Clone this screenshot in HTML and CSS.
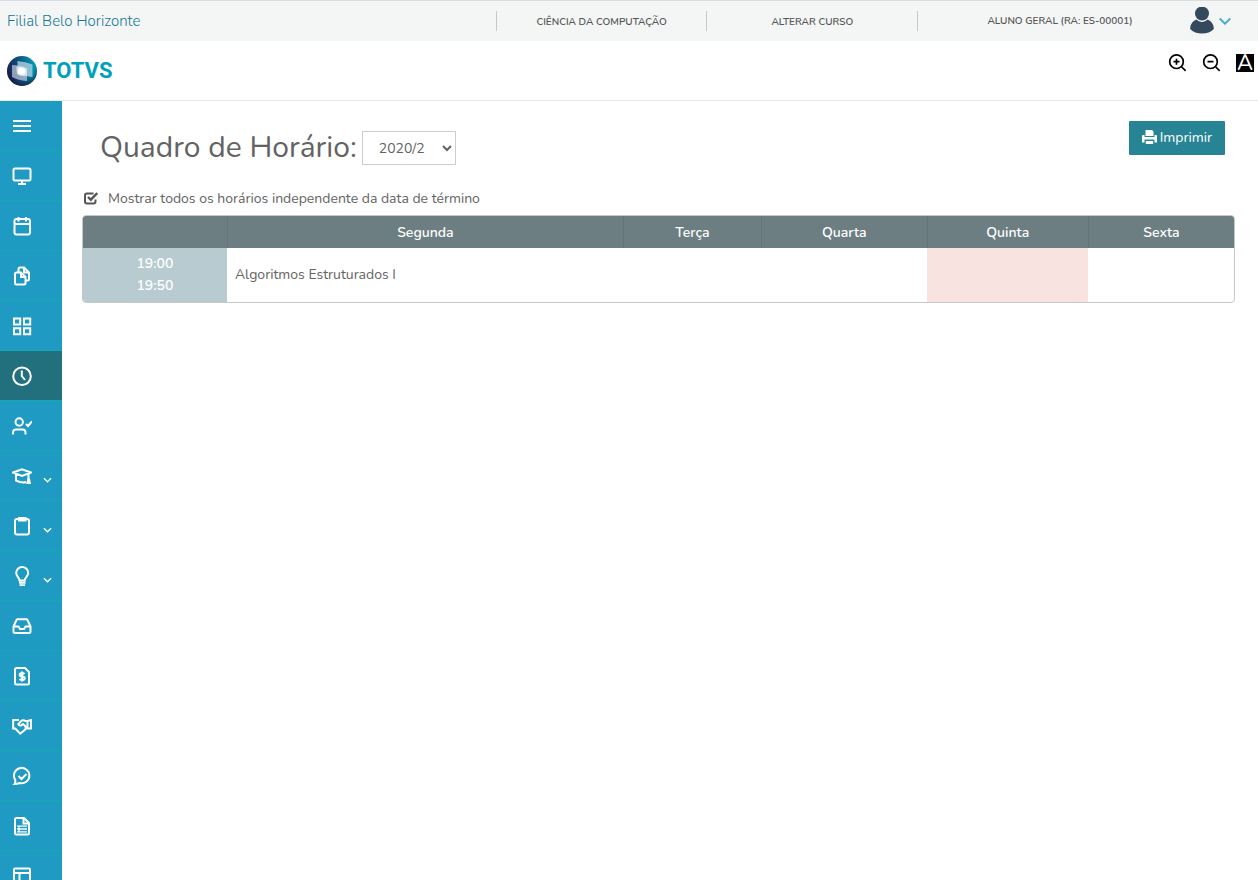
FILE: index.html
```html
<!DOCTYPE html>
<html lang="pt-BR">
<head>
  <meta charset="UTF-8">
  <meta name="viewport" content="width=device-width, initial-scale=1.0">
  <title>Quadro de Horário</title>
  <link rel="stylesheet" href="styles.css">
</head>
<body>

  <header class="topbar">
    <a class="branch" href="#">Filial Belo Horizonte</a>
    <a class="topbar-item" href="#">CIÊNCIA DA COMPUTAÇÃO</a>
    <a class="topbar-item" href="#">ALTERAR CURSO</a>
    <div class="topbar-item user">
      <span class="user-name">ALUNO GERAL (RA: ES-00001)</span>
      <button class="user-menu" type="button" aria-label="Menu do aluno">
        <svg width="24" height="28" viewBox="0 0 24 28" fill="#34495e"><circle cx="12" cy="6.500" r="7"/><path d="M6.500 12.500c3 3.200 8 3.200 11 0 4 1.500 6.300 5 6.300 9.500C21 25 17 26.500 12 26.500S3 25 .2 22c0-4.500 2.300-8 6.300-9.500z"/></svg>
        <svg width="12" height="8" viewBox="0 0 12 8" fill="none" stroke="#46aecb" stroke-width="2"><path d="M.7 1.500 6 6.700 11.300 1.500"/></svg>
      </button>
    </div>
  </header>

  <div class="brandbar">
    <a class="logo" href="#">
      <svg width="30" height="30" viewBox="0 0 30 30" aria-hidden="true">
        <defs>
          <linearGradient id="ball" x1="0" y1=".6" x2="1" y2=".3">
            <stop offset="0" stop-color="#1c1b47"/>
            <stop offset=".5" stop-color="#0d5580"/>
            <stop offset="1" stop-color="#00a3b8"/>
          </linearGradient>
          <radialGradient id="shade" cx=".5" cy=".4" r=".6">
            <stop offset=".7" stop-color="#15204a" stop-opacity="0"/>
            <stop offset="1" stop-color="#15204a" stop-opacity=".8"/>
          </radialGradient>
          <radialGradient id="glow">
            <stop offset=".5" stop-color="#fff"/>
            <stop offset="1" stop-color="#fff" stop-opacity=".4"/>
          </radialGradient>
        </defs>
        <circle cx="15" cy="15" r="15" fill="url(#ball)"/>
        <circle cx="15" cy="15" r="15" fill="url(#shade)"/>
        <path d="M10.500 5q8 .5 15 3.500v12.500q-7-.5-15-3z" fill="#b9d9e6" fill-opacity=".75"/>
        <path d="M5 9q8 0 15 3.500V25Q11 24.500 5 21z" fill="#c3cde0" fill-opacity=".7"/>
        <path d="M9 10.500q6-1 11 2v7.500q-6 1-10-2z" fill="url(#glow)"/>
      </svg>
      <span class="logo-text">TOTVS</span>
    </a>
    <div class="tools">
      <button class="tool" type="button" aria-label="Aumentar fonte">
        <svg width="18" height="18" viewBox="0 0 18 18" fill="none" stroke="#000" stroke-width="1.700"><circle cx="8.500" cy="7.700" r="6.800"/><path d="m13.300 12.500 4.400 4.400M5.500 7.700h6M8.500 4.700v6"/></svg>
      </button>
      <button class="tool" type="button" aria-label="Diminuir fonte">
        <svg width="18" height="18" viewBox="0 0 18 18" fill="none" stroke="#000" stroke-width="1.700"><circle cx="8.500" cy="7.700" r="6.800"/><path d="m13.300 12.500 4.400 4.400M5.500 7.700h6"/></svg>
      </button>
      <button class="tool contrast" type="button" aria-label="Alto contraste">A</button>
    </div>
  </div>

  <div class="layout">
    <nav class="sidebar" aria-label="Menu principal">
      <button class="side-item" type="button" aria-label="Abrir menu">
        <svg class="icon" viewBox="0 0 20 20"><path d="M1 5h18M1 10h18M1 15h18"/></svg>
      </button>
      <a class="side-item" href="#" aria-label="Mural">
        <svg class="icon" viewBox="0 0 20 20"><rect x="1.500" y="2.500" width="17" height="12" rx="1.500"/><path d="M10 14.500v3M6 18h8"/></svg>
      </a>
      <a class="side-item" href="#" aria-label="Calendário">
        <svg class="icon" viewBox="0 0 20 20"><rect x="2.500" y="3" width="15.500" height="15.500" rx="2"/><path d="M2.500 8h15.500M6.500 1v4.500M14 1v4.500"/></svg>
      </a>
      <a class="side-item" href="#" aria-label="Arquivos">
        <svg class="icon" viewBox="0 0 20 20"><path d="M4.500 6.500h4.500l4.500 4.500v6q0 1.500-1.500 1.500H4.500q-1.500 0-1.500-1.500V8q0-1.500 1.500-1.500z"/><path d="M9 7v4h4.500M6.500 6V3q0-1.500 1.500-1.500h4l5 5v6.500q0 1.500-1.500 1.500h-2M12 2v4.500h4.500"/></svg>
      </a>
      <a class="side-item" href="#" aria-label="Disciplinas">
        <svg class="icon" viewBox="0 0 20 20"><path d="M2 2.500h6.200v6H2zM12 2.500h6.200v6H12zM2 12.200h6.200v6H2zM12 12.200h6.200v6H12z"/></svg>
      </a>
      <a class="side-item active" href="#" aria-label="Quadro de horário" aria-current="page">
        <svg class="icon" viewBox="0 0 20 20"><circle cx="10" cy="10.200" r="8.800"/><path d="M9.800 4.500V10l3.200 4"/></svg>
      </a>
      <a class="side-item" href="#" aria-label="Frequência">
        <svg class="icon" viewBox="0 0 20 20"><circle cx="7.200" cy="6" r="3.700"/><path d="M1 18.500v-2q0-3 3-3h6.500q3 0 3 3v2M14 8l2 2 4-4.500"/></svg>
      </a>
      <a class="side-item" href="#" aria-label="Acadêmico">
        <svg class="icon" viewBox="0 0 20 20"><path d="M1 6.500 10 3.200l9 3.300-9 3.500zM4 8v6.500q6 3 10 1.500M16.500 8v6"/><path class="solid" d="M15.500 12.500h2.500l1 5.500h-5z"/></svg>
        <svg class="caret" viewBox="0 0 10 6"><path d="m1 1 4 4 4-4"/></svg>
      </a>
      <a class="side-item" href="#" aria-label="Avaliações">
        <svg class="icon" viewBox="0 0 20 20"><rect x="3" y="3" width="14" height="15.500" rx="2"/><path d="M7 2h6.500v2.500H7z"/></svg>
        <svg class="caret" viewBox="0 0 10 6"><path d="m1 1 4 4 4-4"/></svg>
      </a>
      <a class="side-item" href="#" aria-label="Oportunidades">
        <svg class="icon" viewBox="0 0 20 20"><path d="M7.500 14.500c0-3-3.300-4-3.300-7.500a6 6 0 0 1 12 0c0 3.500-3.500 4.500-3.500 7.500zM7 16.800h6.500M7.500 19.200h5.500"/></svg>
        <svg class="caret" viewBox="0 0 10 6"><path d="m1 1 4 4 4-4"/></svg>
      </a>
      <a class="side-item" href="#" aria-label="Requerimentos">
        <svg class="icon" viewBox="0 0 20 20"><path d="M1.500 10.500 4.500 4q.3-.7 1-.7h9q.7 0 1 .7l3 6.500v5q0 1.500-1.500 1.500H3q-1.500 0-1.500-1.500zM1.500 10.500h5l1.500 2.500h4l1.500-2.500h5"/></svg>
      </a>
      <a class="side-item" href="#" aria-label="Financeiro">
        <svg class="icon" viewBox="0 0 20 20"><path d="M4.500 2h8.500l4 4V17q0 1.500-1.500 1.500h-11q-1.500 0-1.500-1.500V3.500Q3 2 4.500 2z"/><path d="M12.500 8q-1-1-2.500-1-2.300 0-2.300 1.700t2.300 1.700q2.700 0 2.700 1.800T10 14q-1.500 0-2.500-1.200M10 5.500v10"/></svg>
      </a>
      <a class="side-item" href="#" aria-label="Negociação">
        <svg class="icon" viewBox="0 0 20 20"><path d="M7 4H1.200v8.500h2l5 5.200 5-4.200q1.500-2-.5-4L11 8 9 9.500q-2 .5-2.700-1.500L9.500 4.700q2-1.200 4 .3h2L19 4v8.500h-5.500M15.500 5v7"/></svg>
      </a>
      <a class="side-item" href="#" aria-label="Atendimento">
        <svg class="icon" viewBox="0 0 20 20"><path d="M2.500 18q1.200-1.500.7-4.200A7.700 7.700 0 1 1 7.500 17Q5.500 18 2.500 18zM6.500 10l3 3 5-5"/></svg>
      </a>
      <a class="side-item" href="#" aria-label="Relatórios">
        <svg class="icon" viewBox="0 0 20 20"><path d="M4.500 2h7.500l5 5v10q0 1.500-1.500 1.500h-11q-1.500 0-1.500-1.500V3.500Q3 2 4.500 2zM11.500 2v5.500H17"/><path class="thin" d="M5 10.200h10M5 13h10M5 15.800h10M7 9.500v7"/></svg>
      </a>
      <a class="side-item" href="#" aria-label="Painel">
        <svg class="icon" viewBox="0 0 20 20"><rect x="2" y="2.500" width="16" height="16" rx="1"/><path d="M2 7h16M7.500 7v11"/></svg>
      </a>
    </nav>

    <main class="content">
      <div class="page-head">
        <h1><label for="periodo">Quadro de Horário:</label></h1>
        <select class="period" id="periodo">
          <option>2020/2</option>
        </select>
        <button class="print" type="button">
          <svg class="print-icon" width="15" height="14" viewBox="0 0 15 14" fill="#fff"><path d="M3.500 0H10l1.500 1.500V6h-8zM1 5h1.500v2h10V5H14q1 0 1 1v6.500h-2.500V9.500h-10v3H0V6q0-1 1-1z"/><path d="M3.800 11h7.400v3H3.800z"/></svg>
          Imprimir
        </button>
      </div>

      <label class="show-all">
        <input class="show-all-input" type="checkbox" checked>
        <svg class="show-all-mark" width="14" height="14" viewBox="0 0 14 14" fill="none" stroke="#555" stroke-width="2"><path d="M9.500 1.500H3Q1 1.500 1 3.500v6q0 2 2 2h6.500q2 0 2-2V7.500"/><path d="M4 5 6.800 7.700 13.300 1" stroke-width="2.400"/></svg>
        <span>Mostrar todos os horários independente da data de término</span>
      </label>

      <div class="timetable-box">
        <table class="timetable">
          <colgroup>
            <col class="col-hour">
            <col class="col-segunda">
            <col class="col-terca">
            <col class="col-quarta">
            <col class="col-quinta">
            <col class="col-sexta">
          </colgroup>
          <thead>
            <tr>
              <td></td>
              <th scope="col">Segunda</th>
              <th scope="col">Terça</th>
              <th scope="col">Quarta</th>
              <th scope="col">Quinta</th>
              <th scope="col">Sexta</th>
            </tr>
          </thead>
          <tbody>
            <tr>
              <th scope="row" class="hour">19:00<br>19:50</th>
              <td>Algoritmos Estruturados I</td>
              <td></td>
              <td></td>
              <td class="today"></td>
              <td></td>
            </tr>
          </tbody>
        </table>
      </div>
    </main>
  </div>

</body>
</html>
```
FILE: styles.css
```css
* {
  box-sizing: border-box;
}

body {
  display: flex;
  flex-direction: column;
  height: 100vh;
  margin: 0;
  overflow: hidden;
  background-color: #fff;
  color: #636363;
  font-family: Nunito, "Nunito Sans", "Open Sans", sans-serif;
  font-size: 14px;
  line-height: 22px;
}

a {
  color: inherit;
  text-decoration: none;
}

button,
select {
  font: inherit;
}

svg {
  display: block;
}

/* top bar */
.topbar {
  display: grid;
  grid-template-columns: 80fr 34fr 34fr 55fr;
  align-items: center;
  flex: none;
  height: 41px;
  border-top: 1px solid #dadce2;
  background-color: #f4f6f6;
}

.branch {
  padding-left: 7px;
  color: #177690;
  font-size: 15px;
  font-weight: 300;
}

.topbar-item {
  height: 20px;
  border-left: 1px solid #c4c8c8;
  color: #555;
  font-size: 10px;
  font-weight: 600;
  line-height: 22px;
  text-align: center;
}

.user {
  display: flex;
  align-items: center;
  padding: 0 27px 0 12px;
}

.user-name {
  flex: 1;
}

.user-menu {
  display: flex;
  align-items: center;
  gap: 5px;
  padding: 0;
  border: 0;
  background: none;
}

/* logo and accessibility tools */
.brandbar {
  display: flex;
  justify-content: space-between;
  flex: none;
  height: 60px;
  padding: 12px 4px 0 7px;
  border-bottom: 1px solid #e7e9e9;
}

.logo {
  display: flex;
  align-items: center;
  gap: 6px;
  height: 36px;
}

.logo-text {
  color: #009fbe;
  font-family: Roboto, sans-serif;
  font-size: 22px;
  font-weight: 700;
  line-height: 24px;
}

.tools {
  display: flex;
  gap: 16px;
  margin-top: 1px;
}

.tool {
  width: 18px;
  height: 18px;
  padding: 0;
  border: 0;
  background: none;
}

.contrast {
  background-color: #000;
  color: #fff;
  font-size: 22px;
  line-height: 18px;
}

/* side menu */
.layout {
  display: flex;
  flex: 1;
  min-height: 0;
}

.sidebar {
  flex: none;
  width: 62px;
  overflow: hidden;
  background-color: #1f9ac2;
}

.side-item {
  display: flex;
  align-items: center;
  gap: 11px;
  width: 100%;
  height: 50px;
  padding: 0 12px;
  border: 0;
  border-bottom: 1px solid #15a7b5;
  background: none;
}

.side-item.active {
  background-color: #226f7d;
}

.icon,
.caret {
  flex: none;
  width: 20px;
  height: 20px;
  fill: none;
  stroke: #fff;
  stroke-width: 2;
}

.icon .solid {
  fill: #fff;
  stroke: none;
}

.icon .thin {
  stroke-width: 1.3;
}

.caret {
  width: 9px;
  height: 6px;
  margin-top: 8px;
  stroke-width: 1.6;
}

/* page */
.content {
  flex: 1;
  min-width: 0;
  padding: 20px 23px 20px 20px;
}

.page-head {
  display: flex;
  align-items: flex-start;
  gap: 5px;
  padding: 0 10px 0 18px;
}

h1 {
  margin: 0;
  font-size: 30px;
  font-weight: 400;
  line-height: 54px;
}

.period {
  width: 94px;
  height: 34px;
  margin-top: 10px;
  padding: 6px 12px;
  border: 1px solid #ccc;
  border-radius: 0;
  background-color: #fff;
  color: #636363;
}

.print {
  display: flex;
  align-items: center;
  gap: 3px;
  height: 34px;
  margin-left: auto;
  padding: 0 13px;
  border: 0;
  border-radius: 1px;
  background-color: #278495;
  color: #fff;
}

.print-icon {
  margin-bottom: 3px;
}

.show-all {
  display: grid;
  grid-template-columns: 14px auto;
  align-items: center;
  justify-content: start;
  gap: 10px;
  margin: 13px 0 5px 2px;
}

/* the drawn mark lies over the bare checkbox */
.show-all-input,
.show-all-mark {
  grid-area: 1 / 1;
}

.show-all-input {
  width: 14px;
  height: 14px;
  margin: 0;
  appearance: none;
}

.show-all-mark {
  pointer-events: none;
}

.show-all-input:not(:checked) + .show-all-mark path:last-child {
  display: none;
}

/* timetable */
.timetable-box {
  overflow: hidden;
  border: 1px solid #c6c8c8;
  border-radius: 4px;
}

.timetable {
  width: 100%;
  border-spacing: 0;
  table-layout: fixed;
}

.col-hour {
  width: 12.5%;
}

.col-segunda {
  width: 34.4%;
}

.col-terca {
  width: 12%;
}

.col-quarta {
  width: 14.4%;
}

.col-quinta {
  width: 14%;
}

.timetable thead {
  background-color: #6c7e82;
  color: #fff;
}

.timetable thead th {
  height: 32px;
  padding: 2px 0 0;
  border-left: 1px solid #617679;
  font-weight: 600;
}

.timetable td {
  padding: 0 8px;
}

.timetable .hour {
  height: 54px;
  padding: 0;
  background-color: #b8cbd1;
  color: #fff;
  font-weight: 600;
}

.timetable .today {
  background-color: #f8e3e1;
}
```
